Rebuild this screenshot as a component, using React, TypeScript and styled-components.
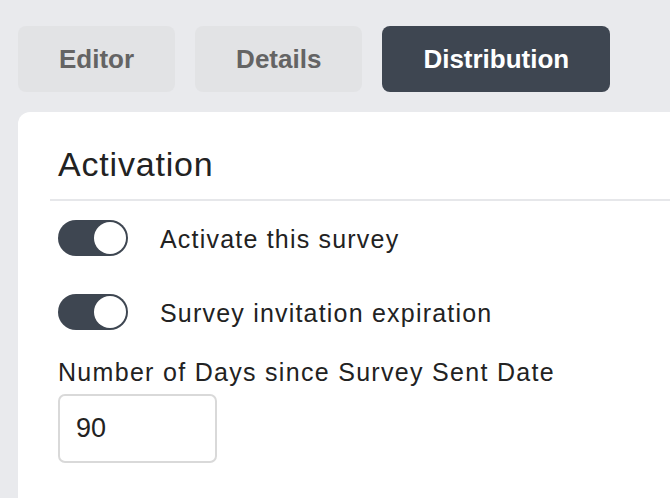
import React from 'react';
import styled, { createGlobalStyle } from 'styled-components';

const GlobalStyle = createGlobalStyle`
  html, body {
    margin: 0;
    padding: 0;
    background: #e9eaed;
    font-family: "Liberation Sans", Arial, Helvetica, sans-serif;
    color: #222;
  }
`;

const tabs = ['Editor', 'Details', 'Distribution'];

const App: React.FC = () => {
  return (
    <>
      <GlobalStyle />
      <Page>
        <TabBar>
          {tabs.map((t) => (
            <Tab key={t} active={t === 'Distribution'}>
              {t}
            </Tab>
          ))}
        </TabBar>
        <Card>
          <Heading>Activation</Heading>
          <Divider />
          <Body>
            <ToggleRow>
              <Toggle on />
              <ToggleLabel>Activate this survey</ToggleLabel>
            </ToggleRow>
            <ToggleRow>
              <Toggle on />
              <ToggleLabel>Survey invitation expiration</ToggleLabel>
            </ToggleRow>
            <Field>
              <FieldLabel>Number of Days since Survey Sent Date</FieldLabel>
              <NumberInput defaultValue="90" />
            </Field>
          </Body>
        </Card>
      </Page>
    </>
  );
};

const Toggle: React.FC<{ on?: boolean }> = ({ on }) => (
  <Track on={on}>
    <Knob />
  </Track>
);

const Page = styled.div`
  min-height: 498px;
  padding: 26px 0 0 18px;
  box-sizing: border-box;
  overflow: hidden;
`;

const TabBar = styled.div`
  display: flex;
  gap: 20px;
`;

const Tab = styled.div<{ active?: boolean }>`
  height: 66px;
  padding: 0 41px;
  display: flex;
  align-items: center;
  border-radius: 8px;
  font-size: 26px;
  font-weight: 700;
  background: ${({ active }) => (active ? '#3e4651' : '#e2e3e5')};
  color: ${({ active }) => (active ? '#ffffff' : '#646464')};
`;

const Card = styled.div`
  margin-top: 20px;
  width: 700px;
  min-height: 400px;
  background: #fff;
  border-top-left-radius: 12px;
  padding: 32px 0 0 32px;
  box-sizing: border-box;
`;

const Heading = styled.h2`
  margin: 0;
  padding-left: 8px;
  font-size: 34px;
  font-weight: 400;
  line-height: 1.2;
  letter-spacing: 0.8px;
  color: #222;
`;

const Divider = styled.div`
  margin-top: 14px;
  height: 2px;
  background: #e6e7ea;
`;

const Body = styled.div`
  padding: 19px 0 0 8px;
  display: flex;
  flex-direction: column;
`;

const ToggleRow = styled.div`
  display: flex;
  align-items: center;
  gap: 32px;
  height: 36px;

  & + & {
    margin-top: 38px;
  }
`;

const Track = styled.div<{ on?: boolean }>`
  width: 70px;
  height: 36px;
  border-radius: 18px;
  background: ${({ on }) => (on ? '#3e4651' : '#ccc')};
  display: flex;
  align-items: center;
  justify-content: ${({ on }) => (on ? 'flex-end' : 'flex-start')};
  padding: 0 2px;
  box-sizing: border-box;
  flex-shrink: 0;
`;

const Knob = styled.div`
  width: 32px;
  height: 32px;
  border-radius: 50%;
  background: #fff;
`;

const ToggleLabel = styled.span`
  padding-top: 4px;
  font-size: 25px;
  letter-spacing: 1.2px;
  color: #222;
`;

const Field = styled.div`
  margin-top: 28px;
  display: flex;
  flex-direction: column;
  gap: 8px;
`;

const FieldLabel = styled.label`
  font-size: 25px;
  line-height: 28px;
  letter-spacing: 1.3px;
  color: #222;
`;

const NumberInput = styled.input`
  width: 159px;
  height: 69px;
  box-sizing: border-box;
  border: 2px solid #d9d9d9;
  border-radius: 7px;
  padding: 0 0 0 16px;
  font-family: "Liberation Sans", Arial, Helvetica, sans-serif;
  font-size: 27px;
  color: #222;
  outline: none;
`;

export default App;
